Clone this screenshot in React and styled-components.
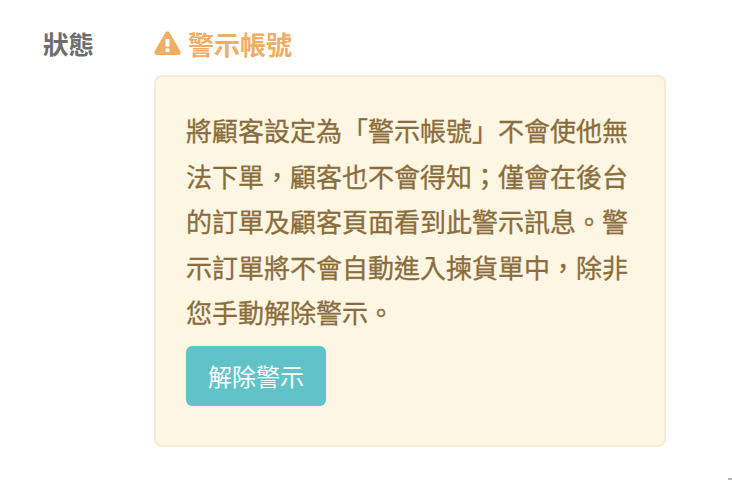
import React from "react";
import styled, { createGlobalStyle } from "styled-components";

const GlobalStyle = createGlobalStyle`
  html, body {
    margin: 0;
    background: #fff;
    font-family: "Noto Sans CJK TC", "Noto Sans", sans-serif;
  }
`;

const Row = styled.div`
  position: relative;
  display: flex;
  width: 732px;
  height: 480px;
  box-sizing: border-box;
  padding: 26px 66px 0 43px;
  overflow: hidden;
`;

const Label = styled.div`
  width: 111px;
  flex: none;
  font-size: 25.5px;
  line-height: 34px;
  font-weight: 700;
  color: #6d6d6d;
`;

const Content = styled.div`
  flex: 1;
  display: flex;
  flex-direction: column;
`;

const Status = styled.div`
  display: flex;
  align-items: center;
  gap: 7px;
  height: 34px;
  font-size: 26px;
  font-weight: 700;
  color: #f0ad66;
`;

const Notice = styled.div`
  margin-top: 15px;
  box-sizing: border-box;
  height: 372px;
  padding: 30px 30px;
  background: #fdf6e3;
  border: 2px solid #f7ecd2;
  border-radius: 8px;
`;

const Message = styled.p`
  margin: 0;
  font-size: 26px;
  line-height: 45.5px;
  font-weight: 400;
  color: #8a6d3b;
  -webkit-text-stroke: 0.3px #8a6d3b;
`;

const ClearButton = styled.button`
  display: block;
  margin-top: 11px;
  width: 140px;
  height: 60px;
  padding: 0;
  border: 0;
  border-radius: 6px;
  background: #5fc3c8;
  color: #fff;
  font-family: inherit;
  font-size: 24px;
`;

const CornerMark = styled.div`
  position: absolute;
  right: 0;
  bottom: 0;
  width: 4px;
  height: 2px;
  background: #b5b5b5;
`;

function WarningIcon() {
  return (
    <svg width="27" height="24" viewBox="0 0 27 24">
      <path
        fillRule="evenodd"
        fill="#f0ad66"
        d="M13.5 0.5c1 0 1.8 .5 2.3 1.4l10.6 18.4c1 1.8-.2 3.7-2.2 3.7H2.8c-2 0-3.2-1.9-2.2-3.7L11.2 1.9c.5-.9 1.3-1.4 2.3-1.4zM11.5 8h4v7.5h-4zM11.5 17.5h4v3.5h-4z"
      />
    </svg>
  );
}

export default function App() {
  return (
    <>
      <GlobalStyle />
      <Row>
        <Label>狀態</Label>
        <Content>
          <Status>
            <WarningIcon />
            警示帳號
          </Status>
          <Notice>
            <Message>
              將顧客設定為「警示帳號」不會使他無法下單，顧客也不會得知；僅會在後台的訂單及顧客頁面看到此警示訊息。警示訂單將不會自動進入揀貨單中，除非您手動解除警示。
            </Message>
            <ClearButton>解除警示</ClearButton>
          </Notice>
        </Content>
        <CornerMark />
      </Row>
    </>
  );
}
